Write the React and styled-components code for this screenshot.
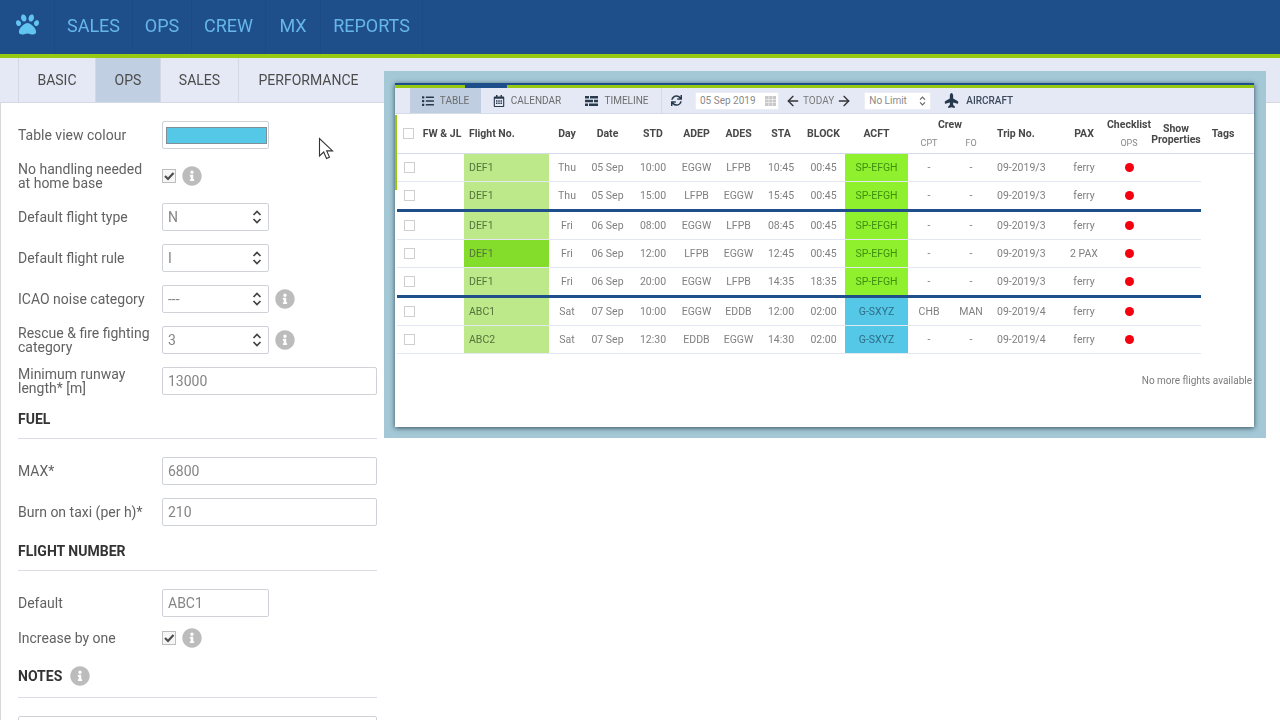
import React from 'react';
import styled, { createGlobalStyle } from 'styled-components';
import { FaPaw, FaInfoCircle, FaList, FaRegCalendarAlt, FaSync, FaPlane } from 'react-icons/fa';
import { ArrowLeft, ArrowRight } from 'lucide-react';

const GlobalStyle = createGlobalStyle`
  html, body {
    margin: 0;
    height: 720px;
    overflow: hidden;
    background: #fff;
    font-family: Roboto, "Liberation Sans", sans-serif;
  }
`;

const Page = styled.div`
  position: relative;
  width: 1280px;
  height: 720px;
  overflow: hidden;
  filter: blur(0.4px);
`;

const TopBar = styled.header`
  display: flex;
  height: 54px;
  background: #1f4f8b;
  border-bottom: 4px solid #97c913;
`;

const Logo = styled.div`
  width: 55px;
  display: flex;
  align-items: center;
  justify-content: center;
  color: #62c4f0;
  font-size: 23px;
  padding-bottom: 5px;
  box-sizing: border-box;
  border-right: 1px solid #1c4a83;
`;

const NavItem = styled.a`
  width: ${p => p.$w}px;
  display: flex;
  align-items: center;
  justify-content: center;
  box-sizing: border-box;
  padding-bottom: 4px;
  color: #66b6ea;
  font-size: 18px;
  border-right: 1px solid #1c4a83;
`;

const TabBar = styled.div`
  display: flex;
  height: 44px;
  padding-left: 18px;
  background: #e4e9f5;
  border-bottom: 1px solid #d4d9e4;
`;

const Tab = styled.a`
  width: ${p => p.$w}px;
  display: flex;
  align-items: center;
  justify-content: center;
  box-sizing: border-box;
  font-size: 14px;
  color: #4c4c4c;
  border-left: 1px solid #d3d8e4;
  background: ${p => (p.$active ? '#c0cfe1' : 'transparent')};
`;

const Main = styled.div`
  display: flex;
  align-items: flex-start;
`;

const Sidebar = styled.aside`
  display: flex;
  flex-direction: column;
  width: 377px;
  box-sizing: border-box;
  padding: 18px 0 0 17px;
  flex: none;
  border-left: 1px solid #d8d8d8;
`;

const Row = styled.div`
  display: flex;
  align-items: center;
  height: ${p => (p.$compact ? 16 : 28)}px;
  margin-bottom: 13px;
`;

const Label = styled.label`
  width: 144px;
  box-sizing: border-box;
  padding-right: 8px;
  flex: none;
  font-size: 14px;
  line-height: 14px;
  color: #626262;
`;

const Input = styled.div`
  width: ${p => (p.$wide ? '215px' : '107px')};
  height: 28px;
  box-sizing: border-box;
  padding: 0 6px 0 5px;
  display: flex;
  align-items: center;
  justify-content: space-between;
  border: 1px solid #cfd2d6;
  border-radius: 2px;
  font-size: 14px;
  color: #858585;
  background: #fff;
`;

const Swatch = styled.div`
  flex: none;
  width: 101px;
  height: 17px;
  margin-left: -2px;
  box-sizing: border-box;
  background: #55c8e8;
  border: 1px solid #7f8f97;
`;

const Check = styled.span`
  width: 14px;
  height: 14px;
  box-sizing: border-box;
  flex: none;
  display: inline-flex;
  border: 1px solid #bdbdbd;
  background: #f6f6f6;
  color: #4d4d4d;
`;

const Info = styled(FaInfoCircle)`
  color: #bcbcbc;
  font-size: 20px;
  margin-left: ${p => p.$gap || 6}px;
`;

const Heading = styled.h3`
  margin: ${p => p.$top}px 0 18px;
  padding-bottom: ${p => p.$pb || 9}px;
  height: 20px;
  display: flex;
  align-items: center;
  font-size: 14px;
  font-weight: 700;
  color: #333;
  border-bottom: 1px solid #dadde6;
`;

const TextArea = styled.div`
  height: 60px;
  border: 1px solid #cfd2d6;
  border-radius: 2px;
`;

const Frame = styled.section`
  margin: -32px 0 0 7px;
  width: 882px;
  height: 367px;
  box-sizing: border-box;
  padding: 12px 12px 11px 11px;
  background: #a4c8d5;
  position: relative;
`;

const Window = styled.div`
  position: relative;
  height: 344px;
  box-sizing: border-box;
  background: #fff;
  border-top: 2px solid #1f4f8b;
  box-shadow: 0 1px 5px rgba(30, 55, 75, 0.85);

  &::before {
    content: '';
    position: absolute;
    left: 0;
    top: 30px;
    width: 2px;
    height: 75px;
    background: #97c913;
  }
`;

const GreenStrip = styled.div`
  display: flow-root;
  height: 3px;
  background: #97c913;
  padding-left: 70px;
`;

const BlueMark = styled.div`
  width: 42px;
  height: 5px;
  margin-top: -2px;
  background: #1f4f8b;
`;

const Toolbar = styled.div`
  display: flex;
  align-items: center;
  height: 25px;
  padding-left: 15px;
  background: #e4e9f5;
  border-bottom: 1px solid #d6dbe8;
  font-size: 10px;
  color: #6c6c6c;
`;

const ToolTab = styled.div`
  width: ${p => p.$w}px;
  height: 100%;
  display: flex;
  align-items: center;
  justify-content: center;
  gap: 6px;
  background: ${p => (p.$active ? '#bfcee1' : 'transparent')};

  svg {
    color: #2a3a4d;
    font-size: 12px;
  }
`;

const ToolSep = styled.div`
  width: 1px;
  height: 100%;
  margin-right: 9px;
  background: #d3d9e6;
`;

const RefreshIcon = styled(FaSync)`
  color: #27384c;
  font-size: 11px;
`;

const DateBox = styled.div`
  width: 84px;
  height: 18px;
  margin: 0 6px 0 13px;
  padding: 0 2px 0 4px;
  box-sizing: border-box;
  display: flex;
  align-items: center;
  justify-content: space-between;
  background: #fff;
  border: 1px solid #ebeef4;
  color: #8a8a8a;
`;

const Today = styled.div`
  display: flex;
  align-items: center;
  gap: 2px;
  color: #7a7a7a;

  svg {
    color: #333;
  }
`;

const LimitBox = styled(DateBox)`
  width: 67px;
  margin: 0 13px 0 12px;
  padding-right: 4px;
`;

const PlaneIcon = styled(FaPlane)`
  color: #26384d;
  font-size: 15px;
  transform: rotate(-90deg);
`;

const AircraftLabel = styled.span`
  margin-left: 7px;
  font-weight: 500;
  color: #3c4a5c;
`;

const COLS = '23px 44px 85px 36px 45px 46px 41px 43px 42px 43px 63px 42px 42px 64px 56px 34px 60px 34px';

const HeadRow = styled.div`
  display: grid;
  grid-template-columns: ${COLS};
  height: 39px;
  margin-left: 2px;
  border-bottom: 1px solid #d5dae8;
  font-size: 10.5px;
  font-weight: 700;
  color: #484848;
`;

const HeadCell = styled.div`
  display: flex;
  flex-direction: column;
  align-items: ${p => (p.$left ? 'flex-start' : 'center')};
  justify-content: center;
  padding-left: ${p => p.$pad || 0}px;
  grid-column: span ${p => p.$span || 1};
  white-space: nowrap;
  line-height: 11px;
  text-align: center;
`;

const SubHead = styled.div`
  display: flex;
  width: 84px;
  margin-top: 8px;
  font-size: 9px;
  font-weight: 400;
  color: #888;

  span {
    flex: 1;
  }
`;

const HeadSub = styled.span`
  margin-top: 8px;
  font-size: 9px;
  font-weight: 400;
  color: #888;
`;

const DataRow = styled.div`
  display: grid;
  grid-template-columns: ${COLS};
  width: 804px;
  height: ${p => (p.$break ? 30 : 28)}px;
  box-sizing: border-box;
  margin-left: 2px;
  overflow: hidden;
  border-bottom: ${p => (p.$break ? '3px solid #1f4f8b' : '1px solid #e3e7f1')};
  font-size: 10.5px;
  color: #808080;
`;

const Cell = styled.div`
  display: flex;
  align-items: center;
  justify-content: ${p => (p.$left ? 'flex-start' : 'center')};
  padding-left: ${p => p.$pad || 0}px;
  white-space: nowrap;
  background: ${p => p.$bg || 'transparent'};
  color: ${p => p.$fg || 'inherit'};
`;

const RowCheck = styled.span`
  width: 11px;
  height: 11px;
  box-sizing: border-box;
  border: 1px solid #cfcfcf;
  margin-left: 1px;
`;

const HeadCheck = styled(RowCheck)`
  margin-left: -1px;
`;

const RedDot = styled.span`
  width: 9px;
  height: 9px;
  border-radius: 50%;
  background: #f4000f;
`;

const NoMore = styled.div`
  margin-top: 21px;
  padding-right: 2px;
  text-align: right;
  font-size: 10px;
  color: #7c7c7c;
`;

const Cursor = styled.svg`
  position: absolute;
  left: 318px;
  top: 137px;
`;

const Chevrons = ({ w = 10, h = 16, color = '#444' }) => (
  <svg width={w} height={h} viewBox="0 0 10 16" fill="none" stroke={color} strokeWidth="1.7">
    <path d="M1.5 6 5 2.5 8.5 6M1.5 10 5 13.5 8.5 10" />
  </svg>
);

const Tick = () => (
  <svg width="12" height="12" viewBox="0 0 12 12" fill="none" stroke="currentColor" strokeWidth="2.2">
    <path d="M2 6 5 9 10.5 3" />
  </svg>
);

const TimelineIcon = () => (
  <svg width="13" height="10" viewBox="0 0 13 10" fill="#2a3a4d">
    <path d="M0 0h4v2.4H0zM5 0h8v2.4H5zM0 3.8h8v2.4H0zM9 3.8h4v2.4H9zM0 7.6h3v2.4H0zM4 7.6h9v2.4H4z" />
  </svg>
);

const GridIcon = () => (
  <svg width="11" height="10" viewBox="0 0 11 10" fill="#c8c8c8">
    <rect width="11" height="10" />
    <path d="M0 3h11v.7H0zM0 6h11v.7H0zM3.5 0h.7v10h-.7zM7 0h.7v10H7z" fill="#eee" />
  </svg>
);

const LIME = '#bde98b';
const GREEN = '#84dc2b';
const ACID = '#8ff12d';
const SKY = '#55c8e8';

const FLIGHTS = [
  ['DEF1', 'Thu', '05 Sep', '10:00', 'EGGW', 'LFPB', '10:45', '00:45', 'SP-EFGH', '-', '-', '09-2019/3', 'ferry'],
  ['DEF1', 'Thu', '05 Sep', '15:00', 'LFPB', 'EGGW', '15:45', '00:45', 'SP-EFGH', '-', '-', '09-2019/3', 'ferry', true],
  ['DEF1', 'Fri', '06 Sep', '08:00', 'EGGW', 'LFPB', '08:45', '00:45', 'SP-EFGH', '-', '-', '09-2019/3', 'ferry'],
  ['DEF1', 'Fri', '06 Sep', '12:00', 'LFPB', 'EGGW', '12:45', '00:45', 'SP-EFGH', '-', '-', '09-2019/3', '2 PAX'],
  ['DEF1', 'Fri', '06 Sep', '20:00', 'EGGW', 'LFPB', '14:35', '18:35', 'SP-EFGH', '-', '-', '09-2019/3', 'ferry', true],
  ['ABC1', 'Sat', '07 Sep', '10:00', 'EGGW', 'EDDB', '12:00', '02:00', 'G-SXYZ', 'CHB', 'MAN', '09-2019/4', 'ferry'],
  ['ABC2', 'Sat', '07 Sep', '12:30', 'EDDB', 'EGGW', '14:30', '02:00', 'G-SXYZ', '-', '-', '09-2019/4', 'ferry'],
];

const FlightRow = ({ data, index }) => {
  const [no, day, date, std, adep, ades, sta, block, acft, cpt, fo, trip, pax, brk] = data;
  const isSky = acft === 'G-SXYZ';
  return (
    <DataRow $break={brk}>
      <Cell><RowCheck /></Cell>
      <Cell />
      <Cell $left $pad={5} $bg={index === 3 ? GREEN : LIME} $fg="#55733a">{no}</Cell>
      <Cell>{day}</Cell>
      <Cell>{date}</Cell>
      <Cell>{std}</Cell>
      <Cell>{adep}</Cell>
      <Cell>{ades}</Cell>
      <Cell>{sta}</Cell>
      <Cell>{block}</Cell>
      <Cell $bg={isSky ? SKY : ACID} $fg={isSky ? '#2e6d85' : '#3f8f10'}>{acft}</Cell>
      <Cell>{cpt}</Cell>
      <Cell>{fo}</Cell>
      <Cell $left $pad={5}>{trip}</Cell>
      <Cell>{pax}</Cell>
      <Cell><RedDot /></Cell>
      <Cell />
    </DataRow>
  );
};

const App = () => (
  <Page>
    <GlobalStyle />
    <TopBar>
      <Logo><FaPaw /></Logo>
      <NavItem $w={78}>SALES</NavItem>
      <NavItem $w={59}>OPS</NavItem>
      <NavItem $w={74}>CREW</NavItem>
      <NavItem $w={55}>MX</NavItem>
      <NavItem $w={102}>REPORTS</NavItem>
    </TopBar>
    <TabBar>
      <Tab $w={77}>BASIC</Tab>
      <Tab $w={65} $active>OPS</Tab>
      <Tab $w={78}>SALES</Tab>
      <Tab $w={140}>PERFORMANCE</Tab>
    </TabBar>
    <Main>
      <Sidebar>
        <Row>
          <Label>Table view colour</Label>
          <Input><Swatch /></Input>
        </Row>
        <Row>
          <Label>No handling needed at home base</Label>
          <Check><Tick /></Check>
          <Info />
        </Row>
        <Row>
          <Label>Default flight type</Label>
          <Input>N<Chevrons /></Input>
        </Row>
        <Row>
          <Label>Default flight rule</Label>
          <Input>I<Chevrons /></Input>
        </Row>
        <Row>
          <Label>ICAO noise category</Label>
          <Input>---<Chevrons /></Input>
          <Info />
        </Row>
        <Row>
          <Label>Rescue &amp; fire fighting category</Label>
          <Input>3<Chevrons /></Input>
          <Info />
        </Row>
        <Row>
          <Label>Minimum runway length* [m]</Label>
          <Input $wide>13000</Input>
        </Row>
        <Heading $top={1}>FUEL</Heading>
        <Row>
          <Label>MAX*</Label>
          <Input $wide>6800</Input>
        </Row>
        <Row>
          <Label>Burn on taxi (per h)*</Label>
          <Input $wide>210</Input>
        </Row>
        <Heading $top={2}>FLIGHT NUMBER</Heading>
        <Row>
          <Label>Default</Label>
          <Input>ABC1</Input>
        </Row>
        <Row $compact>
          <Label>Increase by one</Label>
          <Check><Tick /></Check>
          <Info />
        </Row>
        <Heading $top={7} $pb={11}>NOTES<Info $gap={8} /></Heading>
        <TextArea />
      </Sidebar>
      <Frame>
        <Window>
          <GreenStrip><BlueMark /></GreenStrip>
          <Toolbar>
            <ToolTab $w={71} $active><FaList />TABLE</ToolTab>
            <ToolTab $w={92}><FaRegCalendarAlt />CALENDAR</ToolTab>
            <ToolTab $w={88}><TimelineIcon />TIMELINE</ToolTab>
            <ToolSep />
            <RefreshIcon />
            <DateBox>05 Sep 2019<GridIcon /></DateBox>
            <Today><ArrowLeft size={16} />TODAY<ArrowRight size={16} /></Today>
            <LimitBox>No Limit<Chevrons w={7} h={12} color="#666" /></LimitBox>
            <PlaneIcon />
            <AircraftLabel>AIRCRAFT</AircraftLabel>
          </Toolbar>
          <HeadRow>
            <HeadCell><HeadCheck /></HeadCell>
            <HeadCell>FW &amp; JL</HeadCell>
            <HeadCell $left $pad={5}>Flight No.</HeadCell>
            <HeadCell>Day</HeadCell>
            <HeadCell>Date</HeadCell>
            <HeadCell>STD</HeadCell>
            <HeadCell>ADEP</HeadCell>
            <HeadCell>ADES</HeadCell>
            <HeadCell>STA</HeadCell>
            <HeadCell>BLOCK</HeadCell>
            <HeadCell>ACFT</HeadCell>
            <HeadCell $span={2}>
              Crew
              <SubHead><span>CPT</span><span>FO</span></SubHead>
            </HeadCell>
            <HeadCell $left $pad={5}>Trip No.</HeadCell>
            <HeadCell>PAX</HeadCell>
            <HeadCell>Checklist<HeadSub>OPS</HeadSub></HeadCell>
            <HeadCell>Show<br />Properties</HeadCell>
            <HeadCell>Tags</HeadCell>
          </HeadRow>
          {FLIGHTS.map((f, i) => <FlightRow key={i} data={f} index={i} />)}
          <NoMore>No more flights available</NoMore>
        </Window>
      </Frame>
    </Main>
    <Cursor width="16" height="24" viewBox="0 0 16 24">
      <path d="M1.5 1.5V19l4.2-4 2.8 6.5 3-1.3-2.8-6.3h5.8z" fill="#fff" stroke="#333" strokeWidth="1.1" />
    </Cursor>
  </Page>
);

export default App;
